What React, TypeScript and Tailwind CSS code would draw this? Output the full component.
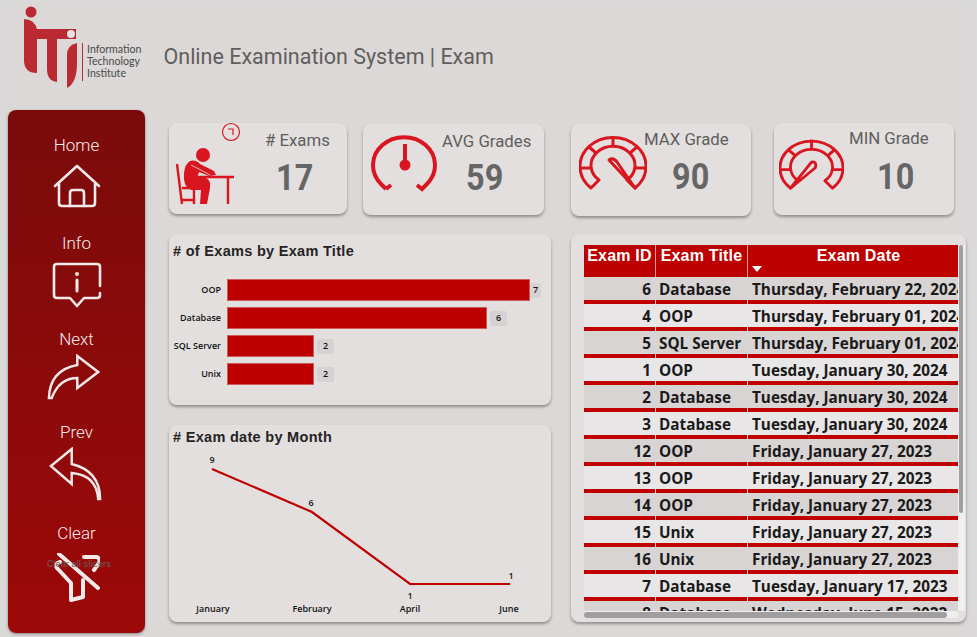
const rows = [
  ["6", "Database", "Thursday, February 22, 2024"],
  ["4", "OOP", "Thursday, February 01, 2024"],
  ["5", "SQL Server", "Thursday, February 01, 2024"],
  ["1", "OOP", "Tuesday, January 30, 2024"],
  ["2", "Database", "Tuesday, January 30, 2024"],
  ["3", "Database", "Tuesday, January 30, 2024"],
  ["12", "OOP", "Friday, January 27, 2023"],
  ["13", "OOP", "Friday, January 27, 2023"],
  ["14", "OOP", "Friday, January 27, 2023"],
  ["15", "Unix", "Friday, January 27, 2023"],
  ["16", "Unix", "Friday, January 27, 2023"],
  ["7", "Database", "Tuesday, January 17, 2023"],
  ["8", "Database", "Wednesday, June 15, 2022"],
];

const bars = [
  { label: "OOP", value: 7, width: 302 },
  { label: "Database", value: 6, width: 259 },
  { label: "SQL Server", value: 2, width: 86 },
  { label: "Unix", value: 2, width: 86 },
];

function Logo() {
  return (
    <svg width="64" height="84" viewBox="0 0 64 84" className="shrink-0">
      <g fill="#bb2a33">
        <circle cx="7" cy="7" r="5.5" />
        <path d="M0 14 Q10 14 13 24 V68 Q0 68 0 55 Z" />
        <path d="M13 24 H52 V34 H33 V77 Q23 76 23 64 V34 H13 Z" />
        <path d="M53 38 V58 Q53 78 43 83 V50 Q43 40 53 38 Z" />
        <rect x="58" y="38" width="1" height="38" />
      </g>
      <circle cx="47" cy="29" r="4" fill="#e8e4e4" />
    </svg>
  );
}

function StudentIcon() {
  return (
    <svg width="70" height="84" viewBox="174 122 70 84" className="shrink-0">
      <g fill="none" stroke="#d9161f">
        <circle cx="231" cy="132" r="8.5" strokeWidth="1.2" />
        <path d="M228 129 H233 V135" strokeWidth="1.2" />
        <path d="M177 164 L182 204 M182 188 H195 M182 200 H195 M194 188 V204" strokeWidth="2.4" />
        <path d="M197 177 H234 M228 177 V204" strokeWidth="2.4" />
      </g>
      <circle cx="203" cy="155" r="7" fill="#d9161f" />
      <path
        d="M190 161 Q196 159 200 164 L214 171 L216 175 L209 176 L199 172 L197 178 H206 Q211 180 210 188 L207 204 H200 L201 190 H192 Q183 188 184 173 Q185 164 190 161 Z"
        fill="#d9161f"
      />
      <path d="M191 165 L199 169 L210 175" fill="none" stroke="#e3dfdf" strokeWidth="0.8" />
    </svg>
  );
}

function AvgGauge() {
  return (
    <svg width="68" height="62" viewBox="0 0 68 62" className="shrink-0">
      <g fill="none" stroke="#d9161f" strokeWidth="4">
        <path d="M15 57 L20 53 M15 57 L10 52 A31 28 0 1 1 56 52 L51 57 L46 53" />
      </g>
      <path d="M32 12 H36 V32 H32 Z" fill="#d9161f" />
      <circle cx="34" cy="33" r="5.5" fill="#d9161f" />
    </svg>
  );
}

function Gauge({ needle, width, height }: { needle: string; width: number; height: number }) {
  return (
    <svg width={width} height={height} viewBox="0 0 68 58" preserveAspectRatio="none" className="shrink-0">
      <g fill="none" stroke="#d9161f" strokeWidth="3" strokeLinejoin="round">
        <path d="M12 55 A33 29 0 1 1 56 55 L48 47 A22 19 0 1 0 20 47 Z" />
        <path d="M34 3 V13 M9 13 L17 20 M59 13 L51 20 M1 35 H12 M67 35 H56" />
        <path d={needle} />
      </g>
    </svg>
  );
}

function Card({ className, children }: { className: string; children: React.ReactNode }) {
  return (
    <div className={`flex rounded-lg bg-[#e3dfdf] shadow-[0_2px_3px_rgba(0,0,0,0.35)] ${className}`}>
      {children}
    </div>
  );
}

function Stat({ title, value, className, valueClass }: { title: string; value: string; className: string; valueClass: string }) {
  return (
    <div className={`flex flex-col items-center ${className}`}>
      <span className="text-[16.8px] leading-[20px] text-[#605e5c]">{title}</span>
      <span className={`scale-x-90 text-[36px] leading-[40px] font-bold text-[#666666] ${valueClass}`}>
        {value}
      </span>
    </div>
  );
}

function NavItem({ label, icon, className }: { label: string; icon: React.ReactNode; className: string }) {
  return (
    <div className={`flex flex-col items-center ${className}`}>
      <span className="text-[17px] leading-[20px] font-light text-[#f4ecec]">{label}</span>
      {icon}
    </div>
  );
}

export default function App() {
  return (
    <div className="relative flex h-[637px] w-[977px] flex-col overflow-hidden bg-[#dcd8d8] font-['Roboto',sans-serif]">
      {/* Window edge of the report canvas */}
      <div className="pointer-events-none absolute inset-0 border-t-[3px] border-r-[8px] border-l-[5px] border-[#dadada]" />

      {/* Header */}
      <header className="flex h-[110px] shrink-0 items-start pl-[24px] pt-[5px]">
        <Logo />
        <div className="ml-[-1px] mt-[38px] text-[10.6px] leading-[12px] text-[#4a4a4a] font-['Lato',sans-serif]">
          <div>Information</div>
          <div>Technology</div>
          <div>Institute</div>
        </div>
        <h1 className="ml-[22px] mt-[39px] text-[21.5px] leading-[26px] font-normal text-[#605e5c]">
          Online Examination System | Exam
        </h1>
      </header>

      <div className="flex">
        {/* Side nav */}
        <nav className="relative ml-[8px] flex h-[523px] w-[137px] shrink-0 flex-col rounded-lg bg-gradient-to-b from-[#7b0b0b] to-[#9d0808] shadow-[0_1px_3px_rgba(0,0,0,0.4)]">
          <NavItem
            label="Home"
            className="mt-[25px]"
            icon={
              <svg width="50" height="46" viewBox="0 0 50 46" className="mt-[8px]" fill="none" stroke="#f2eaea" strokeWidth="2.6" strokeLinejoin="round" strokeLinecap="round">
                <path d="M3 23 L25 3 L47 23 M7 21 V40 Q7 43 10 43 H40 Q43 43 43 40 V21" />
                <path d="M18 43 V30 Q18 27 21 27 H29 Q32 27 32 30 V43" />
              </svg>
            }
          />
          <NavItem
            label="Info"
            className="mt-[24px]"
            icon={
              <svg width="50" height="48" viewBox="0 0 50 48" className="mt-[9px]" fill="none" stroke="#f2eaea" strokeWidth="2.6" strokeLinecap="round" strokeLinejoin="round">
                <path d="M48 24 V5 Q48 2 45 2 H5 Q2 2 2 5 V33 Q2 36 5 36 H18 L25 44 L32 36 H45 Q48 36 48 33 V31" />
                <path d="M25 18 V29" strokeWidth="3" />
                <circle cx="25" cy="12" r="1.2" strokeWidth="1.6" />
              </svg>
            }
          />
          <NavItem
            label="Next"
            className="mt-[19px]"
            icon={
              <svg width="53" height="46" viewBox="0 0 56 46" preserveAspectRatio="none" className="mt-[5px] ml-[-6px]" fill="none" stroke="#f0e8e8" strokeWidth="2.6" strokeLinejoin="miter">
                <path d="M2 44 Q3 16 32 11 V2 L54 18 L32 34 V24 Q13 24 5 44 Z" />
              </svg>
            }
          />
          <NavItem
            label="Prev"
            className="mt-[22px]"
            icon={
              <svg width="53" height="54" viewBox="0 0 56 54" preserveAspectRatio="none" className="mt-[5px] ml-[-3px]" fill="none" stroke="#f0e8e8" strokeWidth="2.6" strokeLinejoin="miter">
                <path d="M54 52 Q54 24 24 17 V2 L2 19 L24 37 V26 Q50 28 52 52 Z" />
              </svg>
            }
          />
          <NavItem
            label="Clear"
            className="mt-[22px]"
            icon={
              <svg width="46" height="50" viewBox="53 553 46 50" className="mt-[10px]" fill="none" stroke="#f2eaea" strokeWidth="4" strokeLinecap="round" strokeLinejoin="round">
                <path d="M58 554 L97 588" />
                <path d="M59 562 Q53 564 56 568 L70 583 V600 L82 597 V580" />
                <path d="M83 557 H96 Q100 559 98 563 L93 570" />
              </svg>
            }
          />
          <span className="absolute left-[39px] top-[449px] text-[9.5px] leading-[10px] text-[#6e5a5a]">Clear all slicers</span>
        </nav>

        <main className="ml-[24px] flex flex-col">
          {/* KPI cards */}
          <div className="flex items-start pt-[13px]">
            <Card className="h-[91px] w-[178px] pl-[5px]">
              <div className="mt-[-1px]"><StudentIcon /></div>
              <Stat title="# Exams" value="17" className="ml-[21px] mt-[7px]" valueClass="mt-[8px] ml-[-6px]" />
            </Card>
            <Card className="ml-[16px] mt-[1px] h-[91px] w-[181px] pl-[8px]">
              <div className="mt-[8px]"><AvgGauge /></div>
              <Stat title="AVG Grades" value="59" className="ml-[3px] mt-[7px]" valueClass="mt-[7px] ml-[-4px]" />
            </Card>
            <Card className="ml-[27px] mt-[1px] h-[92px] w-[180px] pl-[8px]">
              <div className="mt-[9px]"><Gauge width={68} height={58} needle="M30 27 Q34 24 38 29 L56 55 Z" /></div>
              <Stat title="MAX Grade" value="90" className="ml-[-3px] mt-[5px]" valueClass="mt-[8px] ml-[8px]" />
            </Card>
            <Card className="ml-[23px] h-[92px] w-[180px] pl-[5px]">
              <div className="mt-[14px]"><Gauge width={65} height={54} needle="M34 27 Q40 26 38 33 L12 55 Z" /></div>
              <Stat title="MIN Grade" value="10" className="ml-[5px] mt-[5px]" valueClass="mt-[9px] ml-[14px]" />
            </Card>
          </div>

          <div className="mt-[18px] flex items-start">
            <div className="flex flex-col">
              {/* Bar chart */}
              <Card className="h-[171px] w-[382px] flex-col">
                <h2 className="ml-[4px] mt-[8px] text-[14.5px] leading-[18px] font-bold tracking-[0.3px] text-[#252423] font-['Liberation_Sans',sans-serif]">
                  # of Exams by Exam Title
                </h2>
                <div className="mt-[19px] flex flex-col gap-[6px]">
                  {bars.map((bar) => (
                    <div key={bar.label} className="flex h-[22px] items-center">
                      <span className="w-[52px] text-right text-[9px] font-semibold whitespace-nowrap text-[#111111] font-['Open_Sans',sans-serif]">
                        {bar.label}
                      </span>
                      <div className="ml-[6px] h-[22px] border border-[#cf5a5a] bg-[#bd0000]" style={{ width: bar.width + 1 }} />
                      <span
                        className={
                          bar.value === 7
                            ? "flex h-[15px] w-[11px] items-center justify-center rounded-[2px] bg-[#d6d2d2] text-[9px] font-semibold text-[#111111] font-['Open_Sans',sans-serif]"
                            : "ml-[3px] flex h-[15px] w-[17px] items-center justify-center rounded-[2px] bg-[#d6d2d2] text-[9px] font-semibold text-[#111111] font-['Open_Sans',sans-serif]"
                        }
                      >
                        {bar.value}
                      </span>
                    </div>
                  ))}
                </div>
              </Card>

              {/* Line chart */}
              <Card className="mt-[20px] h-[197px] w-[382px] flex-col">
                <h2 className="ml-[4px] mt-[3px] text-[14.5px] leading-[18px] font-bold tracking-[0.3px] text-[#252423] font-['Liberation_Sans',sans-serif]">
                  # Exam date by Month
                </h2>
                <svg width="382" height="176" viewBox="0 0 382 176" className="text-[9px] font-semibold font-['Open_Sans',sans-serif]">
                  <polyline points="43,23 143,66 241,138 341,138" fill="none" stroke="#c00000" strokeWidth="2.2" />
                  <g fill="#111111" textAnchor="middle">
                    <text x="43" y="17">9</text>
                    <text x="142" y="60">6</text>
                    <text x="241" y="153">1</text>
                    <text x="342" y="133">1</text>
                    <text x="44" y="166">January</text>
                    <text x="143" y="166">February</text>
                    <text x="241" y="166">April</text>
                    <text x="340" y="166">June</text>
                  </g>
                </svg>
              </Card>
            </div>

            {/* Table */}
            <div className="relative ml-[20px] h-[388px] w-[395px] rounded-lg bg-[#e3dfdf] pl-[13px] pt-[11px] shadow-[0_2px_3px_rgba(0,0,0,0.35)]">
              <div className="h-[366px] w-[375px] overflow-hidden">
                <div className="flex h-[32px] bg-[#bd0000] text-[16px] leading-[22px] font-bold tracking-[0.2px] text-white font-['Liberation_Sans',sans-serif]">
                  <div className="w-[72px] border-r border-[#e2a0a0] text-center">Exam ID</div>
                  <div className="w-[92px] border-r border-[#e2a0a0] text-center">Exam Title</div>
                  <div className="relative w-[211px] pl-[10px] text-center">
                    Exam Date
                    <span className="absolute left-[4px] top-[21px] h-0 w-0 border-x-[5px] border-t-[6px] border-x-transparent border-t-white" />
                  </div>
                </div>
                {rows.map((row, i) => (
                  <div
                    key={row[0]}
                    className={`flex h-[27px] text-[15.3px] leading-[25px] font-bold whitespace-nowrap text-[#1a1a1a] font-['Open_Sans',sans-serif] ${i % 2 === 0 ? "bg-[#d8d4d4]" : "bg-[#e8e6e6]"}`}
                  >
                    <div className="h-[27px] w-[71px] border-b-[4px] border-[#c00000] pr-[4px] text-right">{row[0]}</div>
                    <div className="ml-[1px] h-[27px] w-[91px] border-b-[4px] border-[#c00000] pl-[3px]">{row[1]}</div>
                    <div className="ml-[1px] h-[27px] w-[211px] overflow-hidden border-b-[4px] border-[#c00000] pl-[4px]">{row[2]}</div>
                  </div>
                ))}
              </div>
              {/* Scrollbars */}
              <div className="absolute left-[387px] top-[11px] h-[366px] w-[7px] bg-[#f0eeee]" />
              <div className="absolute left-[13px] top-[377px] h-[7px] w-[374px] rounded bg-[#f0eeee]" />
              <div className="absolute left-[388px] top-[11px] h-[268px] w-[4px] rounded bg-[#a09e9e]" />
              <div className="absolute left-[13px] top-[378px] h-[6px] w-[363px] rounded bg-[#a09e9e]" />
            </div>
          </div>
        </main>
      </div>
    </div>
  );
}
